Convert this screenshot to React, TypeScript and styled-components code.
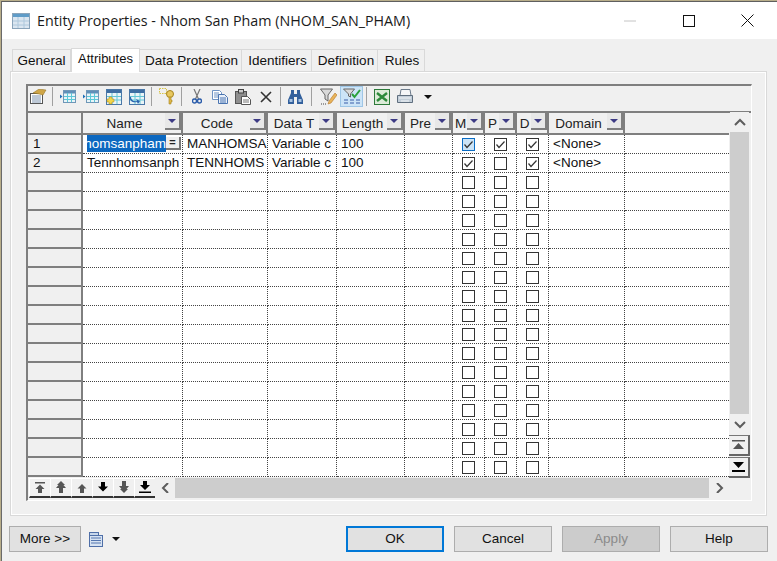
import React from 'react';
import styled, { createGlobalStyle } from 'styled-components';

const GlobalStyle = createGlobalStyle`
  html, body {
    margin: 0;
    padding: 0;
    width: 777px;
    height: 561px;
    overflow: hidden;
    background: #b9ae8a;
    font-family: "Liberation Sans", Arial, sans-serif;
  }
  * { box-sizing: border-box; }
`;

const Win = styled.div`
  width: 776px;
  height: 560px;
  margin: 1px 0 0 1px;
  background: #f0f0f0;
  border-top: 1px solid #5f5f5f;
  border-left: 1px solid #6a6a6a;
  display: flex;
  flex-direction: column;
`;

const TitleBar = styled.div`
  height: 37px;
  background: #fff;
  display: flex;
  align-items: center;
  padding-left: 10px;
  flex: none;
`;

const TitleText = styled.div`
  font-family: "Open Sans", "Liberation Sans", sans-serif;
  font-size: 14.3px;
  color: #1a1a1a;
  margin-left: 7px;
  flex: 1;
  white-space: nowrap;
`;

const WinButton = styled.div`
  width: 59px;
  height: 37px;
  display: flex;
  align-items: center;
  justify-content: center;
`;

const Body = styled.div`
  flex: 1;
  padding: 9px 9px 0 8px;
  display: flex;
  flex-direction: column;
`;

const Tabs = styled.div`
  display: flex;
  height: 23px;
  padding-left: 2px;
  position: relative;
  z-index: 1;
`;

const Tab = styled.div<{ $active?: boolean; $w: number; $pad: number }>`
  width: ${p => p.$w}px;
  flex: none;
  font-size: ${p => (p.$active ? '13px' : '13.5px')};
  color: #111;
  text-align: center;
  padding-left: ${p => p.$pad}px;
  background: ${p => (p.$active ? '#fff' : '#f0f0f0')};
  border: 1px solid #d9d9d9;
  border-left-width: ${p => (p.$active ? '1px' : '0')};
  border-bottom: none;
  height: ${p => (p.$active ? '24px' : '22px')};
  margin-top: ${p => (p.$active ? '0' : '1px')};
  line-height: ${p => (p.$active ? '20px' : '21px')};
  white-space: nowrap;
  &:first-child { border-left-width: 1px; }
`;

const Pane = styled.div`
  width: 757px;
  height: 445px;
  border: 1px solid #d9d9d9;
  padding: 12px 13px 0 15px;
  background: #f0f0f0;
  box-shadow: inset 0 0 0 1px #fff;
`;

const Editor = styled.div`
  width: 726px;
  height: 417px;
  border-top: 2px solid #7f7f7f;
  border-left: 2px solid #7f7f7f;
  border-right: 1px solid #fff;
  border-bottom: 1px solid #fff;
  display: flex;
  flex-direction: column;
`;

const Toolbar = styled.div`
  height: 25px;
  padding-bottom: 4px;
  display: flex;
  align-items: center;
  flex: none;
`;

const ToolIcon = styled.div<{ $on?: boolean; $w?: number }>`
  width: ${p => p.$w ?? 23}px;
  height: 21px;
  flex: none;
  display: flex;
  align-items: center;
  justify-content: center;
  background: ${p => (p.$on ? '#cce4f7' : 'transparent')};
  outline: ${p => (p.$on ? '1px solid #9ec6e6' : 'none')};
  outline-offset: -1px;
`;

const ToolSep = styled.div<{ $wide?: boolean }>`
  width: 1px;
  height: 19px;
  flex: none;
  background: #a0a0a0;
  margin: ${p => (p.$wide ? '0 5px 0 4px' : '0 3px')};
`;

const GridWrap = styled.div`
  border-top: 2px solid #7f7f7f;
  display: flex;
  flex: none;
  height: 366px;
`;

const GridMain = styled.div`
  width: 701px;
  flex: none;
`;

const HeadRow = styled.div`
  display: flex;
  height: 22px;
  border-bottom: 2px solid #7f7f7f;
`;

const Row = styled.div`
  display: flex;
  height: 19px;
`;

const Corner = styled.div`
  width: 55px;
  flex: none;
  background: #f0f0f0;
  border-right: 2px solid #7f7f7f;
`;

const RowHead = styled.div`
  width: 55px;
  flex: none;
  background: #f0f0f0;
  border-right: 2px solid #7f7f7f;
  border-bottom: 2px solid #7f7f7f;
  font-size: 13.5px;
  line-height: 17px;
  padding-left: 5px;
  color: #111;
`;

const HeadCell = styled.div<{ $w: number }>`
  width: ${p => p.$w}px;
  flex: none;
  position: relative;
  border-right: 2px solid #7f7f7f;
  font-size: 13.5px;
  line-height: 21px;
  color: #222;
  padding-right: 15px;
  text-align: center;
  white-space: nowrap;
  overflow: hidden;
`;

const Filler = styled.div`
  flex: 1;
`;

const SortBtn = styled.span`
  position: absolute;
  right: 0;
  top: 0;
  width: 16px;
  height: 17px;
  background: #e8e8e8;
  border-right: 2px solid #7f7f7f;
  border-bottom: 2px solid #7f7f7f;
  display: flex;
  align-items: center;
  justify-content: center;
  &::after {
    content: '';
    border-left: 4px solid transparent;
    border-right: 4px solid transparent;
    border-top: 4px solid #3c3a84;
  }
`;

const Cell = styled.div<{ $w: number }>`
  width: ${p => p.$w}px;
  flex: none;
  background: #fff;
  border-right: 1px dotted #444;
  border-bottom: 1px dotted #444;
  font-size: 13.5px;
  line-height: 17px;
  color: #111;
  padding-left: 4px;
  white-space: nowrap;
  overflow: hidden;
  position: relative;
`;

const CheckCell = styled(Cell)`
  padding: 3px 0 0;
  display: flex;
  justify-content: center;
  align-items: flex-start;
`;

const Tail = styled.div`
  flex: 1;
  background: #fff;
  border-bottom: 1px dotted #444;
`;

const EditText = styled.span`
  position: absolute;
  left: 4px;
  top: 0;
  width: 79px;
  height: 17px;
  line-height: 17px;
  background: #0c68c0;
  color: #fff;
  overflow: hidden;
  direction: rtl;
  text-align: left;
`;

const EditBtn = styled.span`
  position: absolute;
  right: 1px;
  top: 2px;
  width: 15px;
  height: 13px;
  background: #efefef;
  border-right: 2px solid #777;
  border-bottom: 2px solid #777;
  font-size: 11px;
  font-weight: bold;
  line-height: 11px;
  text-align: center;
  color: #222;
`;

const Check = styled.span<{ $focus?: boolean }>`
  width: 13px;
  height: 13px;
  flex: none;
  background: ${p => (p.$focus ? '#cce4f7' : '#fff')};
  border: 1px solid ${p => (p.$focus ? '#0a6cc4' : '#333')};
  display: flex;
  align-items: center;
  justify-content: center;
`;

const VScroll = styled.div`
  width: 19px;
  flex: none;
  display: flex;
  flex-direction: column;
  margin: -1px 0 0 1px;
`;

const ScrollEnd = styled.div`
  height: 20px;
  flex: none;
  background: #f0f0f0;
  display: flex;
  align-items: center;
  justify-content: center;
`;

const VThumb = styled.div`
  height: 282px;
  flex: none;
  background: #cdcdcd;
`;

const JumpBtn = styled.div`
  height: 21px;
  width: 21px;
  flex: none;
  margin: 1px 0 0 -1px;
  background: #f0f0f0;
  border-top: 1px solid #777;
  border-right: 2px solid #666;
  border-bottom: 2px solid #666;
  display: flex;
  align-items: center;
  justify-content: center;
`;

const BottomBar = styled.div`
  display: flex;
  height: 20px;
  flex: none;
  margin-top: 1px;
  padding-left: 1px;
`;

const NavBtn = styled.div`
  width: 21px;
  height: 20px;
  flex: none;
  background: #f0f0f0;
  border-left: 1px solid #fff;
  border-top: 1px solid #fff;
  border-bottom: 2px solid #333;
  display: flex;
  align-items: center;
  justify-content: center;
`;

const HEnd = styled.div`
  width: 20px;
  flex: none;
  background: #f0f0f0;
  display: flex;
  align-items: center;
  justify-content: center;
`;

const HThumb = styled.div`
  width: 534px;
  flex: none;
  background: #cdcdcd;
`;

const Footer = styled.div`
  display: flex;
  align-items: flex-start;
  padding-top: 10px;
  margin-left: -1px;
`;

const Btn = styled.div<{ $w?: number; $primary?: boolean; $disabled?: boolean }>`
  width: ${p => p.$w ?? 98}px;
  height: 26px;
  flex: none;
  font-size: 13.5px;
  text-align: center;
  color: ${p => (p.$disabled ? '#8a8a8a' : '#111')};
  background: ${p => (p.$disabled ? '#cccccc' : '#e1e1e1')};
  border: ${p => (p.$primary ? '2px solid #0078d7' : '1px solid #adadad')};
  line-height: ${p => (p.$primary ? '22px' : '24px')};
`;

const Buttons = styled.div`
  display: flex;
  gap: 10px;
  margin-left: auto;
`;

const DocMenu = styled.div`
  display: flex;
  align-items: center;
  gap: 9px;
  margin-left: 8px;
  height: 26px;
`;

const Caret = styled.span`
  border-left: 4px solid transparent;
  border-right: 4px solid transparent;
  border-top: 4px solid #111;
`;

const TableIcon = () => (
  <svg width="18" height="16" viewBox="0 0 18 16">
    <rect x="0.5" y="0.5" width="17" height="15" fill="#dbe6f0" stroke="#8aa4ba" />
    <rect x="1" y="1" width="16" height="3" fill="#5f9cc8" />
    <path d="M6 4v11M12 4v11M1 8h16M1 12h16" stroke="#aec8dc" />
  </svg>
);

const PropsIcon = () => (
  <svg width="17" height="15" viewBox="0 0 17 15">
    <rect x="0.5" y="4.5" width="12" height="10" fill="#fff" stroke="#555" />
    <path d="M2 7h9M2 9h9M2 11h9M2 13h9" stroke="#7c93ae" />
    <path d="M3 4l6-4 7 1-3 5-4-1z" fill="#cfa648" stroke="#8b6a1c" strokeWidth=".5" />
  </svg>
);

const RowTableIcon = () => (
  <svg width="16" height="13" viewBox="0 0 16 13">
    <path d="M0 4.500l2.500 2-2.500 2z" fill="#1c6fb8" />
    <rect x="3.500" y="0.500" width="12" height="12" fill="#e8f4f8" stroke="#6f97b8" />
    <rect x="4" y="1" width="11" height="2.500" fill="#5f8fb8" />
    <path d="M7.500 3v9M11.500 3v9M4 6.500h11M4 9.500h11" stroke="#5cc8d8" />
  </svg>
);

const TableAddIcon = ({ blue }: { blue?: boolean }) => (
  <svg width="16" height="16" viewBox="0 0 16 16">
    <rect x="0.5" y="0.5" width="15" height="15" fill="#eaf4f7" stroke="#4a78a8" />
    <rect x="1" y="1" width="14" height="3" fill="#3e6ea3" />
    <path d="M6 4v11M11 4v11M1 7.500h14M1 11h14" stroke="#63c6d6" />
    {blue ? (
      <path d="M2 8c0 3 3 5 6 4l-1-2 4 2-2 3-1-2C4 14 0 12 1 8z" fill="#2a66b0" />
    ) : (
      <path d="M3 8h3v2h2v3H6v2H3v-2H1v-3h2z" fill="#f2d64b" stroke="#a8861c" strokeWidth=".5" />
    )}
  </svg>
);

const KeyIcon = () => (
  <svg width="16" height="17" viewBox="0 0 16 17">
    <path d="M.5.500h7v5h-7z" fill="none" stroke="#d8c448" strokeDasharray="1.500 1" />
    <circle cx="11" cy="6" r="3.500" fill="#e8c860" stroke="#a68420" />
    <path d="M10 9v7h2v-2h1v-2h-1V9z" fill="#e0b848" stroke="#a68420" strokeWidth=".6" />
  </svg>
);

const ScissorsIcon = () => (
  <svg width="10" height="15" viewBox="0 0 10 15">
    <path d="M2 0l4.500 10M8 0L3.500 10" stroke="#777" strokeWidth="1.200" />
    <circle cx="2.500" cy="12" r="2" fill="none" stroke="#2a5caa" strokeWidth="1.400" />
    <circle cx="7.500" cy="12" r="2" fill="none" stroke="#2a5caa" strokeWidth="1.400" />
  </svg>
);

const CopyIcon = () => (
  <svg width="16" height="14" viewBox="0 0 16 14">
    <path d="M.5.500h7l2 2v7H.5z" fill="#fff" stroke="#6f93c3" />
    <path d="M2 3h5M2 5h5M2 7h5" stroke="#6f93c3" />
    <path d="M6.500 4.500h6l3 3v6h-9z" fill="#e9f0fa" stroke="#4a74b0" />
    <path d="M8 8h6M8 10h6M8 12h6" stroke="#4a74b0" />
  </svg>
);

const PasteIcon = () => (
  <svg width="16" height="16" viewBox="0 0 16 16">
    <rect x="0.5" y="2.500" width="11" height="12" fill="#8f8f8f" stroke="#555" />
    <rect x="3.500" y="0.500" width="5" height="3.500" fill="#ccc" stroke="#444" />
    <path d="M6.500 7.500h6l3 3v5h-9z" fill="#fff" stroke="#555" />
    <path d="M8 11h6M8 13h6" stroke="#777" />
  </svg>
);

const DeleteIcon = () => (
  <svg width="12" height="12" viewBox="0 0 12 12">
    <path d="M1 1l10 10M11 1L1 11" stroke="#333" strokeWidth="1.600" />
  </svg>
);

const BinocularsIcon = () => (
  <svg width="15" height="14" viewBox="0 0 15 14">
    <path d="M3 0h3v4h3V0h3v3l3 7v4H9V7H6v7H0v-4l3-7z" fill="#33609c" />
    <path d="M1.500 9h3v3h-3zM10.500 9h3v3h-3z" fill="#a8c4e4" />
  </svg>
);

const FilterIcon = () => (
  <svg width="17" height="17" viewBox="0 0 17 17">
    <path d="M.5 1h12L8 7v6l-3-2V7z" fill="#d9d9d9" stroke="#666" />
    <path d="M15 5l-6 8-1 3 3-1 6-8z" fill="#e9b45a" stroke="#b4762a" strokeWidth=".6" />
    <path d="M1 16h1M3 16h1M5 16h1" stroke="#444" />
  </svg>
);

const FilterOnIcon = () => (
  <svg width="18" height="17" viewBox="0 0 18 17">
    <path d="M.5 1h11L7.500 6v3l-2-1V6z" fill="#d9d9d9" stroke="#666" />
    <path d="M9 6l2.500 3L17 2" fill="none" stroke="#2aa13a" strokeWidth="2" />
    <path d="M1 12h4M7 12h4M13 12h4M1 15h4M7 15h4M13 15h4" stroke="#3a5fa8" />
  </svg>
);

const ExcelIcon = () => (
  <svg width="16" height="16" viewBox="0 0 16 16">
    <rect x="0.5" y="0.500" width="15" height="15" fill="#dcebd8" stroke="#2d7a3a" />
    <path d="M3 4l10 8M13 4L3 12" stroke="#2d8a3a" strokeWidth="2.400" />
  </svg>
);

const PrintIcon = () => (
  <svg width="16" height="15" viewBox="0 0 16 15">
    <path d="M4 .5h9l1 6H3z" fill="#f4f6f8" stroke="#6b7a8a" />
    <path d="M.5 6.500h15v7H.5z" fill="#c2ced9" stroke="#5f6e7e" />
    <path d="M2 9h12M4 12h8" stroke="#f2f5f8" />
  </svg>
);

const DocIcon = () => (
  <svg width="14" height="15" viewBox="0 0 14 15">
    <rect x="0.5" y="0.5" width="9" height="3" fill="#c8d8ec" stroke="#4f6fa8" />
    <rect x="0.5" y="3.500" width="13" height="11" fill="#d7e3f2" stroke="#4f6fa8" />
    <path d="M2 6h10M2 8.500h10M2 11h10" stroke="#5577b0" />
  </svg>
);

type NavKind = 'first' | 'pageUp' | 'up' | 'down' | 'pageDown' | 'last';

const navPaths: Record<NavKind, string> = {
  first: 'M1 1h10v1.500H1zM6 3.500L10.500 8H8v4H4V8H1.500z',
  pageUp: 'M6 0L10 4H8.500L11 7H8v5H4V7H1l2.500-3H2z',
  up: 'M6 3L10.500 7.500H8V12H4V7.500H1.500z',
  down: 'M4 1h4v4.500h3L6 10.500 1 5.500h3z',
  pageDown: 'M4 0h4v5h3L8.500 8H10l-4 4-4-4h1.500L1 5h3z',
  last: 'M4 0h4v4h3L6 9 1 4h3zM0 10.500h12V12H0z',
};

const navColor: Record<NavKind, string> = {
  first: '#555',
  pageUp: '#555',
  up: '#555',
  down: '#000',
  pageDown: '#555',
  last: '#000',
};

const NavArrow = ({ kind }: { kind: NavKind }) => (
  <svg width="12" height="13" viewBox="0 0 12 13">
    <path d={navPaths[kind]} fill={navColor[kind]} />
  </svg>
);

const JumpIcon = ({ top }: { top?: boolean }) => (
  <svg width="15" height="12" viewBox="0 0 15 12">
    {top ? (
      <path d="M1 1h13v1.500H1zM7.500 4L13 10H2z" fill="#555" />
    ) : (
      <path d="M2 1h11L7.500 7zM1 9h13v2H1z" fill="#000" />
    )}
  </svg>
);

const Chevron = ({ dir }: { dir: 'up' | 'down' | 'left' | 'right' }) => {
  const d = {
    up: 'M1 7l5-5 5 5',
    down: 'M1 2l5 5 5-5',
    left: 'M7 0L2 5l5 5',
    right: 'M2 0l5 5-5 5',
  }[dir];
  const horizontal = dir === 'up' || dir === 'down';
  return (
    <svg width={horizontal ? 12 : 9} height={horizontal ? 9 : 10} viewBox={horizontal ? '0 0 12 9' : '0 0 9 10'}>
      <path d={d} fill="none" stroke="#5d5d5d" strokeWidth="2" />
    </svg>
  );
};

const Tick = () => (
  <svg width="11" height="11" viewBox="0 0 11 11">
    <path d="M1.500 5.500l2.500 3 5.500-6" fill="none" stroke="#333" strokeWidth="1.200" />
  </svg>
);

const cols: { name: string; w: number }[] = [
  { name: 'Name', w: 100 },
  { name: 'Code', w: 85 },
  { name: 'Data T', w: 69 },
  { name: 'Length', w: 68 },
  { name: 'Pre', w: 48 },
  { name: 'M', w: 32 },
  { name: 'P', w: 32 },
  { name: 'D', w: 32 },
  { name: 'Domain', w: 76 },
];

type Rec = { code: string; type: string; len: string; m: boolean; p: boolean; d: boolean; name?: string; domain: string };

const rows: (Rec | null)[] = [
  { code: 'MANHOMSA', type: 'Variable c', len: '100', m: true, p: true, d: true, domain: '<None>' },
  { name: 'Tennhomsanph', code: 'TENNHOMS', type: 'Variable c', len: '100', m: true, p: false, d: true, domain: '<None>' },
  ...Array.from({ length: 16 }, () => null),
];

const tabs = [
  { label: 'General', w: 59, pad: 0 },
  { label: 'Attributes', w: 69, pad: 0 },
  { label: 'Data Protection', w: 102, pad: 2 },
  { label: 'Identifiers', w: 70, pad: 2 },
  { label: 'Definition', w: 66, pad: 3 },
  { label: 'Rules', w: 47, pad: 2 },
];

const navKinds: NavKind[] = ['first', 'pageUp', 'up', 'down', 'pageDown', 'last'];

const App: React.FC = () => {
  return (
    <>
      <GlobalStyle />
      <Win>
        <TitleBar>
          <TableIcon />
          <TitleText>Entity Properties - Nhom San Pham (NHOM_SAN_PHAM)</TitleText>
          <WinButton>
            <svg width="12" height="2" viewBox="0 0 12 2"><path d="M0 1h12" stroke="#c4c4c4" /></svg>
          </WinButton>
          <WinButton>
            <svg width="12" height="12" viewBox="0 0 12 12"><rect x="0.5" y="0.5" width="11" height="11" fill="none" stroke="#111" /></svg>
          </WinButton>
          <WinButton>
            <svg width="13" height="13" viewBox="0 0 13 13"><path d="M.5.5l12 12M12.500.5l-12 12" stroke="#111" /></svg>
          </WinButton>
        </TitleBar>
        <Body>
          <Tabs>
            {tabs.map(t => (
              <Tab key={t.label} $w={t.w} $pad={t.pad} $active={t.label === 'Attributes'}>{t.label}</Tab>
            ))}
          </Tabs>
          <Pane>
            <Editor>
              <Toolbar>
                <ToolIcon $w={21}><PropsIcon /></ToolIcon>
                <ToolSep />
                <ToolIcon><RowTableIcon /></ToolIcon>
                <ToolIcon><RowTableIcon /></ToolIcon>
                <ToolIcon><TableAddIcon /></ToolIcon>
                <ToolIcon><TableAddIcon blue /></ToolIcon>
                <ToolSep />
                <ToolIcon><KeyIcon /></ToolIcon>
                <ToolSep />
                <ToolIcon><ScissorsIcon /></ToolIcon>
                <ToolIcon><CopyIcon /></ToolIcon>
                <ToolIcon><PasteIcon /></ToolIcon>
                <ToolIcon><DeleteIcon /></ToolIcon>
                <ToolSep />
                <ToolIcon><BinocularsIcon /></ToolIcon>
                <ToolSep $wide />
                <ToolIcon><FilterIcon /></ToolIcon>
                <ToolIcon $on><FilterOnIcon /></ToolIcon>
                <ToolSep />
                <ToolIcon><ExcelIcon /></ToolIcon>
                <ToolIcon><PrintIcon /></ToolIcon>
                <ToolIcon><Caret /></ToolIcon>
              </Toolbar>
              <GridWrap>
                <GridMain>
                  <HeadRow>
                    <Corner />
                    {cols.map(c => (
                      <HeadCell key={c.name} $w={c.w}>
                        {c.name}
                        <SortBtn />
                      </HeadCell>
                    ))}
                    <Filler />
                  </HeadRow>
                  {rows.map((r, i) => (
                    <Row key={i}>
                      <RowHead>{i < 2 ? i + 1 : ''}</RowHead>
                      <Cell $w={100}>
                        {i === 0 && (
                          <>
                            <EditText>Manhomsanpham</EditText>
                            <EditBtn>=</EditBtn>
                          </>
                        )}
                        {r?.name}
                      </Cell>
                      <Cell $w={85}>{r?.code}</Cell>
                      <Cell $w={69}>{r?.type}</Cell>
                      <Cell $w={68}>{r?.len}</Cell>
                      <Cell $w={48} />
                      <CheckCell $w={32}>
                        <Check $focus={i === 0}>{r?.m && <Tick />}</Check>
                      </CheckCell>
                      <CheckCell $w={32}>
                        <Check>{r?.p && <Tick />}</Check>
                      </CheckCell>
                      <CheckCell $w={32}>
                        <Check>{r?.d && <Tick />}</Check>
                      </CheckCell>
                      <Cell $w={76}>{r?.domain}</Cell>
                      <Tail />
                    </Row>
                  ))}
                </GridMain>
                <VScroll>
                  <ScrollEnd><Chevron dir="up" /></ScrollEnd>
                  <VThumb />
                  <ScrollEnd><Chevron dir="down" /></ScrollEnd>
                  <JumpBtn><JumpIcon top /></JumpBtn>
                  <JumpBtn><JumpIcon /></JumpBtn>
                </VScroll>
              </GridWrap>
              <BottomBar>
                {navKinds.map(k => (
                  <NavBtn key={k}><NavArrow kind={k} /></NavBtn>
                ))}
                <HEnd><Chevron dir="left" /></HEnd>
                <HThumb />
                <HEnd><Chevron dir="right" /></HEnd>
              </BottomBar>
            </Editor>
          </Pane>
          <Footer>
            <Btn $w={72}>More &gt;&gt;</Btn>
            <DocMenu>
              <DocIcon />
              <Caret />
            </DocMenu>
            <Buttons>
              <Btn $primary>OK</Btn>
              <Btn>Cancel</Btn>
              <Btn $disabled>Apply</Btn>
              <Btn>Help</Btn>
            </Buttons>
          </Footer>
        </Body>
      </Win>
    </>
  );
};

export default App;
